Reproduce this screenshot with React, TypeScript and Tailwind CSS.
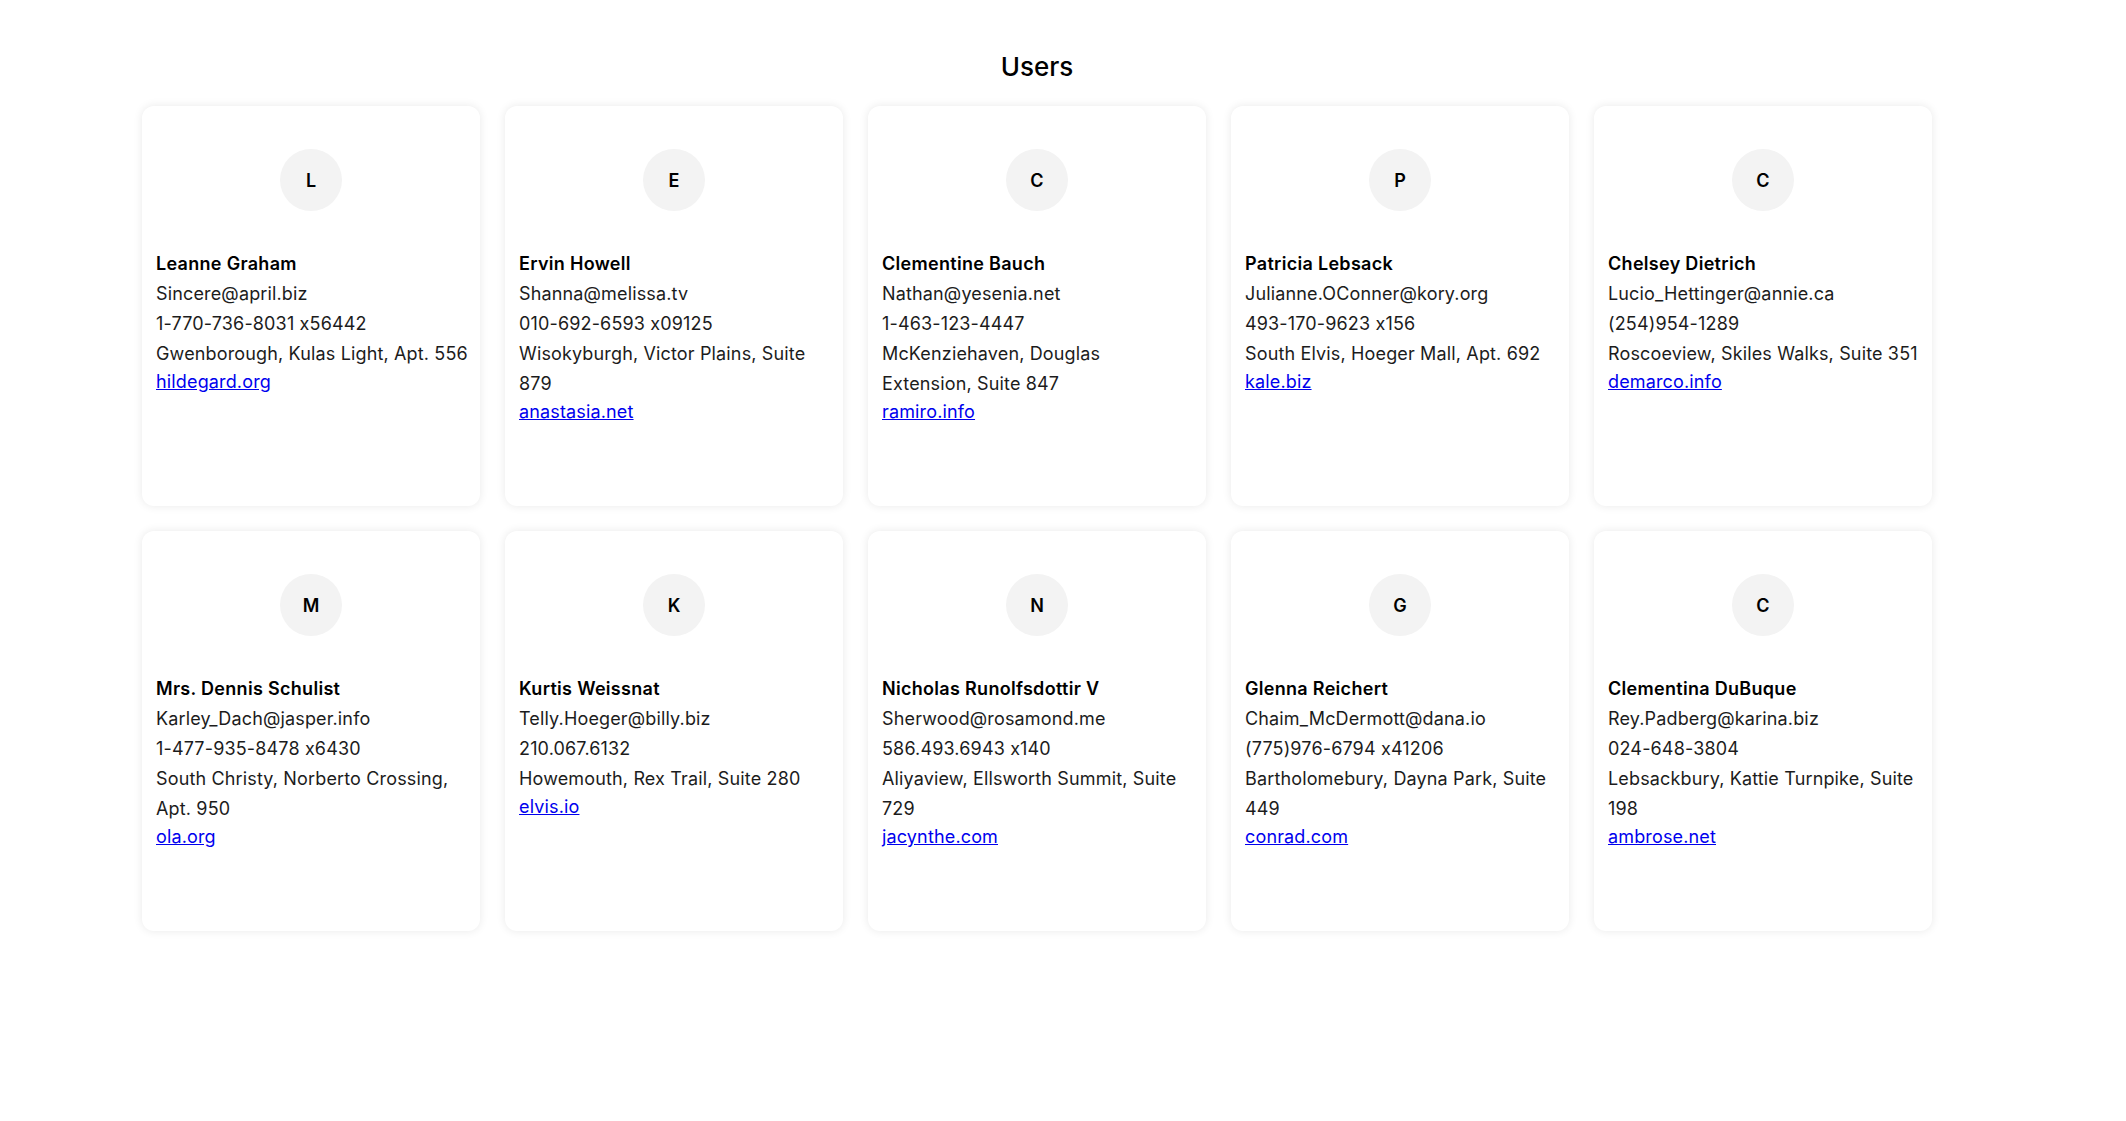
import React from 'react';

interface User {
  id: number;
  name: string;
  email: string;
  phone: string;
  address: string;
  website: string;
}

const users: User[] = [
  { id: 1, name: 'Leanne Graham', email: 'Sincere@april.biz', phone: '1-770-736-8031 x56442', address: 'Gwenborough, Kulas Light, Apt. 556', website: 'hildegard.org' },
  { id: 2, name: 'Ervin Howell', email: 'Shanna@melissa.tv', phone: '010-692-6593 x09125', address: 'Wisokyburgh, Victor Plains, Suite 879', website: 'anastasia.net' },
  { id: 3, name: 'Clementine Bauch', email: 'Nathan@yesenia.net', phone: '1-463-123-4447', address: 'McKenziehaven, Douglas Extension, Suite 847', website: 'ramiro.info' },
  { id: 4, name: 'Patricia Lebsack', email: 'Julianne.OConner@kory.org', phone: '493-170-9623 x156', address: 'South Elvis, Hoeger Mall, Apt. 692', website: 'kale.biz' },
  { id: 5, name: 'Chelsey Dietrich', email: 'Lucio_Hettinger@annie.ca', phone: '(254)954-1289', address: 'Roscoeview, Skiles Walks, Suite 351', website: 'demarco.info' },
  { id: 6, name: 'Mrs. Dennis Schulist', email: 'Karley_Dach@jasper.info', phone: '1-477-935-8478 x6430', address: 'South Christy, Norberto Crossing, Apt. 950', website: 'ola.org' },
  { id: 7, name: 'Kurtis Weissnat', email: 'Telly.Hoeger@billy.biz', phone: '210.067.6132', address: 'Howemouth, Rex Trail, Suite 280', website: 'elvis.io' },
  { id: 8, name: 'Nicholas Runolfsdottir V', email: 'Sherwood@rosamond.me', phone: '586.493.6943 x140', address: 'Aliyaview, Ellsworth Summit, Suite 729', website: 'jacynthe.com' },
  { id: 9, name: 'Glenna Reichert', email: 'Chaim_McDermott@dana.io', phone: '(775)976-6794 x41206', address: 'Bartholomebury, Dayna Park, Suite 449', website: 'conrad.com' },
  { id: 10, name: 'Clementina DuBuque', email: 'Rey.Padberg@karina.biz', phone: '024-648-3804', address: 'Lebsackbury, Kattie Turnpike, Suite 198', website: 'ambrose.net' },
];

const UserCard: React.FC<{ user: User }> = ({ user }) => (
  <div className="h-[400px] rounded-[12px] bg-white pl-[14px] pr-[12px] pt-[43px] shadow-[0_0_10px_rgba(0,0,0,0.09)]">
    {/* Avatar */}
    <div className="flex justify-center pr-[2px]">
      <div className="flex h-[62px] w-[62px] items-center justify-center rounded-full bg-[#f3f3f3] text-[18px] font-semibold text-black">
        {user.name.charAt(0)}
      </div>
    </div>

    <div className="mt-[38px] text-[18px] tracking-[0.15px] text-[#1c1c1c]">
      <div className="leading-[30px] font-semibold tracking-[0.3px] text-black">{user.name}</div>
      <div className="leading-[30px]">{user.email}</div>
      <div className="leading-[30px]">{user.phone}</div>
      <div className="leading-[30px]">{user.address}</div>
      <div className="leading-[26px]">
        <a href="#" className="text-[#0000ee] underline">{user.website}</a>
      </div>
    </div>
  </div>
);

export default function App() {
  return (
    <div className="min-h-[1121px] bg-white pl-[142px] pt-[51px] font-['Inter','Liberation_Sans',sans-serif] [font-feature-settings:'calt'_0]">
      <div className="w-[1790px]">
        <h2 className="mb-[23px] text-center text-[26px] leading-[32px] font-medium text-black">Users</h2>
        <div className="grid grid-cols-[repeat(5,338px)] gap-[25px]">
          {users.map(user => (
            <UserCard key={user.id} user={user} />
          ))}
        </div>
      </div>
    </div>
  );
}
